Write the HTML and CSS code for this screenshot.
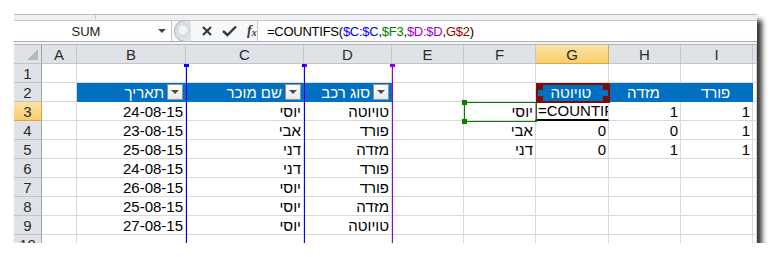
FILE: index.html
```html
<!DOCTYPE html>
<html lang="he">
<head>
    <meta charset="UTF-8">
    <title>COUNTIFS</title>
    <link rel="stylesheet" href="styles.css">
</head>
<body>
    <div class="window">
        <div class="ribbon-edge"><span class="tick"></span></div>

        <div class="formula-bar">
            <div class="name-box">
                <span class="name">SUM</span>
                <span class="drop"></span>
            </div>
            <div class="controls">
                <span class="grip"></span>
                <svg class="ic" width="12" height="12" viewBox="0 0 12 12"><path d="M2 2 L10 10 M10 2 L2 10" stroke="#3a3a3a" stroke-width="2.2"/></svg>
                <svg class="ic" width="15" height="12" viewBox="0 0 15 12"><path d="M1 6 L5.5 10 L14 1.5" fill="none" stroke="#3a3a3a" stroke-width="2.4"/></svg>
                <span class="fx">f<sub>x</sub></span>
            </div>
            <div class="formula">=COUNTIFS(<span class="r-blue">$C:$C</span>,<span class="r-green">$F3</span>,<span class="r-purple">$D:$D</span>,<span class="r-red">G$2</span>)</div>
        </div>
        <div class="gap-strip"></div>

        <div class="sheet">
            <div class="grid">
                <!-- column headers -->
                <div class="ch corner"><span class="tri"></span></div>
                <div class="ch">A</div>
                <div class="ch">B</div>
                <div class="ch">C</div>
                <div class="ch">D</div>
                <div class="ch">E</div>
                <div class="ch">F</div>
                <div class="ch active">G</div>
                <div class="ch">H</div>
                <div class="ch">I</div>
                <div class="ch"></div>

                <!-- row 1 -->
                <div class="rh">1</div>
                <div class="c"></div><div class="c"></div><div class="c"></div><div class="c"></div><div class="c"></div><div class="c"></div><div class="c"></div><div class="c"></div><div class="c"></div><div class="c"></div>

                <!-- row 2 -->
                <div class="rh">2</div>
                <div class="c"></div>
                <div class="c hd"><span class="lbl">תאריך</span><span class="filter"></span></div>
                <div class="c hd"><span class="lbl">שם מוכר</span><span class="filter"></span></div>
                <div class="c hd"><span class="lbl">סוג רכב</span><span class="filter"></span></div>
                <div class="c"></div>
                <div class="c"></div>
                <div class="c hd mid">טויוטה</div>
                <div class="c hd mid">מזדה</div>
                <div class="c hd mid">פורד</div>
                <div class="c"></div>

                <!-- row 3 -->
                <div class="rh active">3</div>
                <div class="c"></div>
                <div class="c">24-08-15</div>
                <div class="c">יוסי</div>
                <div class="c">טויוטה</div>
                <div class="c"></div>
                <div class="c">יוסי</div>
                <div class="c edit">=COUNTIF</div>
                <div class="c">1</div>
                <div class="c">1</div>
                <div class="c"></div>

                <!-- row 4 -->
                <div class="rh">4</div>
                <div class="c"></div>
                <div class="c">23-08-15</div>
                <div class="c">אבי</div>
                <div class="c">פורד</div>
                <div class="c"></div>
                <div class="c">אבי</div>
                <div class="c">0</div>
                <div class="c">0</div>
                <div class="c">1</div>
                <div class="c"></div>

                <!-- row 5 -->
                <div class="rh">5</div>
                <div class="c"></div>
                <div class="c">25-08-15</div>
                <div class="c">דני</div>
                <div class="c">מזדה</div>
                <div class="c"></div>
                <div class="c">דני</div>
                <div class="c">0</div>
                <div class="c">1</div>
                <div class="c">1</div>
                <div class="c"></div>

                <!-- row 6 -->
                <div class="rh">6</div>
                <div class="c"></div>
                <div class="c">24-08-15</div>
                <div class="c">דני</div>
                <div class="c">פורד</div>
                <div class="c"></div><div class="c"></div><div class="c"></div><div class="c"></div><div class="c"></div><div class="c"></div>

                <!-- row 7 -->
                <div class="rh">7</div>
                <div class="c"></div>
                <div class="c">26-08-15</div>
                <div class="c">יוסי</div>
                <div class="c">פורד</div>
                <div class="c"></div><div class="c"></div><div class="c"></div><div class="c"></div><div class="c"></div><div class="c"></div>

                <!-- row 8 -->
                <div class="rh">8</div>
                <div class="c"></div>
                <div class="c">25-08-15</div>
                <div class="c">יוסי</div>
                <div class="c">מזדה</div>
                <div class="c"></div><div class="c"></div><div class="c"></div><div class="c"></div><div class="c"></div><div class="c"></div>

                <!-- row 9 -->
                <div class="rh">9</div>
                <div class="c"></div>
                <div class="c">27-08-15</div>
                <div class="c">יוסי</div>
                <div class="c">טויוטה</div>
                <div class="c"></div><div class="c"></div><div class="c"></div><div class="c"></div><div class="c"></div><div class="c"></div>

                <!-- row 10 -->
                <div class="rh">10</div>
                <div class="c"></div><div class="c"></div><div class="c"></div><div class="c"></div><div class="c"></div><div class="c"></div><div class="c"></div><div class="c"></div><div class="c"></div><div class="c"></div>
            </div>

            <!-- range highlights drawn over the grid -->
            <span class="vline blue l-c"></span>
            <span class="vline blue l-d"></span>
            <span class="vline purple l-e"></span>
            <span class="mark blue m-c"></span>
            <span class="mark split m-d"></span>
            <span class="mark purple m-e"></span>
            <span class="sel-green"></span>
            <span class="sel-red"></span>
        </div>
    </div>
</body>
</html>
```

FILE: styles.css
```css
* {
    margin: 0;
    padding: 0;
    box-sizing: border-box;
}

body {
    background: #ffffff;
    font-family: 'Liberation Sans', Arial, 'DejaVu Sans', sans-serif;
    color: #000;
}

.window {
    position: relative;
    margin: 14px 0 0 14px;
    width: 743px;
    height: 229px;
    overflow: hidden;
    background: #ffffff;
    box-shadow: 5px 6px 5px rgba(0, 0, 0, 0.8);
}

.ribbon-edge {
    position: relative;
    height: 6px;
    border-top: 1px solid #b9bcc1;
    background: #eef0f2;
}

.ribbon-edge .tick {
    position: absolute;
    left: 81px;
    top: 0;
    width: 1px;
    height: 4px;
    background: #c8cacd;
}

/* formula bar */
.formula-bar {
    display: flex;
    height: 22px;
    background: #ffffff;
    border-top: 1px solid #c5c9ce;
    border-bottom: 1px solid #a9adb3;
}

.name-box {
    display: flex;
    align-items: center;
    width: 158px;
    border-right: 1px solid #c5c9ce;
    font-size: 13px;
    color: #1a1a1a;
}

.name-box .name {
    flex: 1;
    text-align: center;
}

.name-box .drop {
    width: 0;
    height: 0;
    margin-right: 5px;
    border-left: 4px solid transparent;
    border-right: 4px solid transparent;
    border-top: 4px solid #444;
}

.controls {
    display: flex;
    align-items: center;
    gap: 9px;
    width: 86px;
    border-right: 1px solid #c5c9ce;
    background: #f7f8f9;
}

.grip {
    width: 17px;
    height: 22px;
    margin-left: 2px;
    margin-right: 1px;
    border: 1px solid #b7bbc0;
    border-right: none;
    border-radius: 11px 0 0 11px;
    background: radial-gradient(circle at 8px 9px, #f2f3f4 0 4px, #d7dadd 5px, #e9eaec 100%);
}

.ic {
    display: block;
}

.fx {
    font-family: 'Liberation Serif', 'Times New Roman', serif;
    font-style: italic;
    font-weight: bold;
    font-size: 14px;
    color: #3a3a3a;
    margin-left: 1px;
}

.fx sub {
    font-size: 10px;
    vertical-align: -1px;
}

.formula {
    flex: 1;
    padding-left: 9px;
    font-size: 13px;
    letter-spacing: -0.25px;
    line-height: 21px;
    color: #000;
    white-space: nowrap;
}

.r-blue { color: #0000ff; }
.r-green { color: #008000; }
.r-purple { color: #9900cc; }
.r-red { color: #990000; }

.gap-strip {
    height: 3px;
    background: #f3f4f6;
    border-bottom: 1px solid #b4b8bd;
}

/* sheet */
.sheet {
    position: relative;
}

.grid {
    display: grid;
    grid-template-columns: 28px 35px 109px 118px 88px 72px 72px 73px 72px 72px 4px;
    grid-template-rows: 19px repeat(10, 19px);
}

.ch, .rh {
    display: flex;
    align-items: center;
    justify-content: center;
    background: #dfe3e8;
    border-right: 1px solid #c2c6cc;
    border-bottom: 1px solid #c2c6cc;
    font-size: 15px;
    color: #2b2b2b;
}

.rh {
    border-right: 1px solid #9ea3aa;
}

.ch.active, .rh.active {
    background: linear-gradient(#fbe3a6, #f8cf6a);
    border-color: #e2a73a;
}

.corner {
    position: relative;
    border-right: 1px solid #9ea3aa;
}

.corner .tri {
    position: absolute;
    right: 3px;
    bottom: 3px;
    width: 0;
    height: 0;
    border-left: 11px solid transparent;
    border-bottom: 11px solid #b5b9be;
}

.c {
    display: flex;
    align-items: center;
    justify-content: flex-end;
    padding-right: 2px;
    border-right: 1px solid #d9d9d9;
    border-bottom: 1px solid #d9d9d9;
    font-size: 15px;
    white-space: nowrap;
    overflow: hidden;
}

.c.hd {
    background: #0070c0;
    border-color: #0070c0;
    color: #ffffff;
}

.c.hd.mid {
    justify-content: center;
}

.filter {
    position: relative;
    flex: none;
    width: 16px;
    height: 16px;
    margin-left: 3px;
    background: linear-gradient(#ffffff, #e4e7eb);
    border: 1px solid #8f949a;
}

.filter::after {
    content: '';
    position: absolute;
    left: 3px;
    top: 5px;
    border-left: 4px solid transparent;
    border-right: 4px solid transparent;
    border-top: 4px solid #4a4a4a;
}

.c.edit {
    justify-content: flex-start;
    padding-left: 2px;
    border-left: 1px solid #ff66cc;
    border-bottom: 2px solid #000;
    margin-left: -1px;
}

/* range overlays */
.vline {
    position: absolute;
    top: 19px;
    bottom: 0;
    width: 1px;
}

.vline.blue { background: #0000ff; }
.vline.purple { background: #9900cc; }

.l-c { left: 172px; }
.l-d { left: 290px; }
.l-e { left: 378px; }

.mark {
    position: absolute;
    top: 19px;
    width: 5px;
    height: 3px;
}

.mark.blue { background: #0000ff; }
.mark.purple { background: #9900cc; }
.mark.split { background: linear-gradient(90deg, #0000ff 50%, #9900cc 50%); }

.m-c { left: 170px; }
.m-d { left: 288px; }
.m-e { left: 376px; }

.sel-green {
    position: absolute;
    left: 450px;
    top: 57px;
    width: 73px;
    height: 20px;
    border: 1px solid #008000;
}

.sel-green::before,
.sel-green::after {
    content: '';
    position: absolute;
    left: -3px;
    width: 5px;
    height: 5px;
    background: #008000;
}

.sel-green::before { top: -3px; }
.sel-green::after { bottom: -3px; }

.sel-red {
    position: absolute;
    left: 522px;
    top: 38px;
    width: 74px;
    height: 20px;
    border: 2px solid #7a0c0c;
    background:
        linear-gradient(#7a0c0c, #7a0c0c) left top / 5px 5px no-repeat,
        linear-gradient(#7a0c0c, #7a0c0c) right top / 5px 5px no-repeat,
        linear-gradient(#7a0c0c, #7a0c0c) left bottom / 5px 5px no-repeat,
        linear-gradient(#7a0c0c, #7a0c0c) right bottom / 5px 5px no-repeat;
}
```
